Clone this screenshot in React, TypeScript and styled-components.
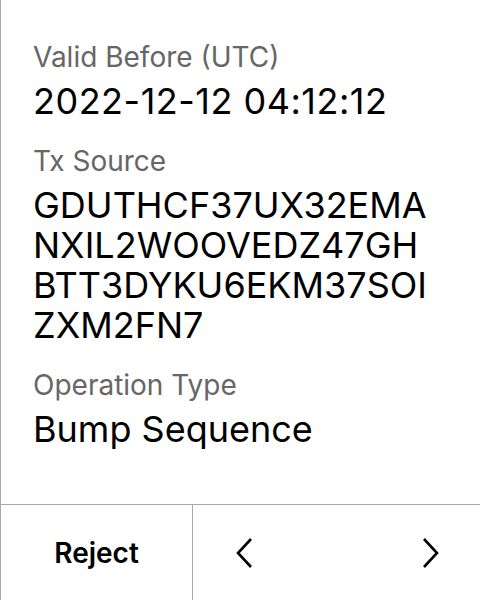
import React from "react";
import styled, { createGlobalStyle } from "styled-components";

const Global = createGlobalStyle`
  html, body { margin: 0; padding: 0; background: #fff; }
  body { font-family: Inter, "Noto Sans", sans-serif; -webkit-font-smoothing: antialiased; }
`;

const Screen = styled.div`
  width: 480px;
  height: 600px;
  box-sizing: border-box;
  border-left: 1px solid #aaaaaa;
  display: flex;
  flex-direction: column;
  background: #fff;
`;

const Content = styled.div`
  flex: 1;
  padding: 40px 32px 0 32px;
  display: flex;
  flex-direction: column;
  gap: 23px;
`;

const Field = styled.div`
  display: flex;
  flex-direction: column;
  gap: 7px;
`;

const Label = styled.div`
  font-size: 28px;
  line-height: 34px;
  color: #666666;
  font-weight: 400;
`;

const Value = styled.div<{ $spaced?: boolean }>`
  font-size: 36px;
  line-height: 40px;
  color: #000;
  font-weight: 400;
  letter-spacing: ${(p) => (p.$spaced ? "0.5px" : "0")};
`;

const Footer = styled.div`
  height: 96px;
  border-top: 1px solid #aaaaaa;
  display: flex;
  box-sizing: border-box;
`;

const RejectButton = styled.div`
  width: 191px;
  border-right: 1px solid #aaaaaa;
  display: flex;
  align-items: center;
  justify-content: center;
  font-size: 28px;
  font-weight: 600;
  color: #000;
`;

const Nav = styled.div`
  flex: 1;
  display: flex;
  align-items: center;
  justify-content: space-between;
  padding: 0 40px 0 42px;
`;

const Chevron = ({ dir }: { dir: "left" | "right" }) => (
  <svg width="20" height="32" viewBox="0 0 20 32">
    {dir === "left" ? (
      <path d="M16 2 L3 16 L16 30" fill="none" stroke="#000" strokeWidth="2.6" />
    ) : (
      <path d="M4 2 L17 16 L4 30" fill="none" stroke="#000" strokeWidth="2.6" />
    )}
  </svg>
);

export default function App() {
  return (
    <>
      <Global />
      <Screen>
        <Content>
          <Field>
            <Label>Valid Before (UTC)</Label>
            <Value $spaced>2022-12-12 04:12:12</Value>
          </Field>
          <Field>
            <Label>Tx Source</Label>
            <Value>
              GDUTHCF37UX32EMA
              <br />
              NXIL2WOOVEDZ47GH
              <br />
              BTT3DYKU6EKM37SOI
              <br />
              ZXM2FN7
            </Value>
          </Field>
          <Field>
            <Label>Operation Type</Label>
            <Value>Bump Sequence</Value>
          </Field>
        </Content>
        <Footer>
          <RejectButton>Reject</RejectButton>
          <Nav>
            <Chevron dir="left" />
            <Chevron dir="right" />
          </Nav>
        </Footer>
      </Screen>
    </>
  );
}
